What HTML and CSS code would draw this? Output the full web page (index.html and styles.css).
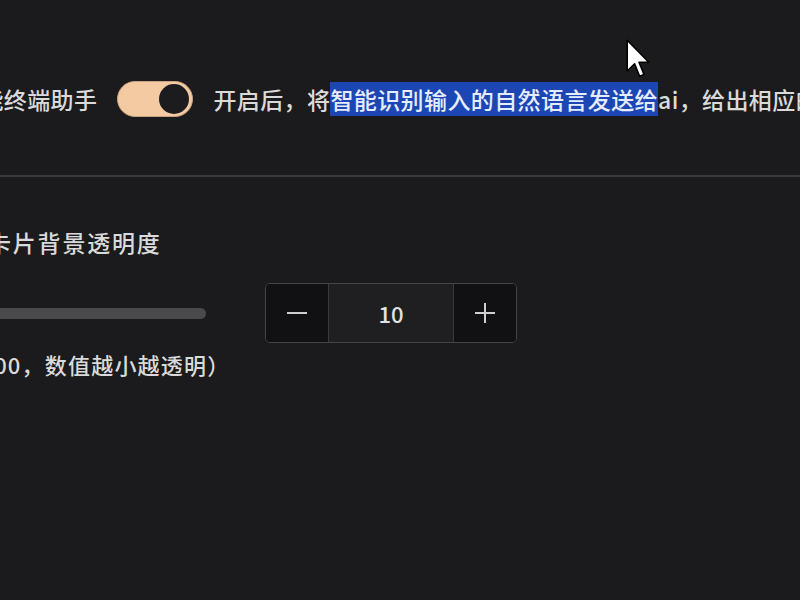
FILE: index.html
```html
<!DOCTYPE html>
<html lang="zh">
<head>
<meta charset="utf-8">
<link rel="stylesheet" href="styles.css">
</head>
<body>
<div class="page">
  <div class="row-assistant">
    <span class="label">智能终端助手</span>
    <span class="toggle"><span class="knob"></span></span>
    <span class="hint">开启后，将<span class="sel">智能识别输入的自然语言发送给</span>ai，给出相应的命令建议</span>
  </div>
  <div class="divider"></div>
  <div class="section">
    <div class="title">卡片背景透明度</div>
    <div class="control-row">
      <div class="track"></div>
      <div class="stepper">
        <button class="btn"><svg width="22" height="22" viewBox="0 0 22 22"><path d="M1 11H21" stroke="#cfcfcf" stroke-width="2"/></svg></button>
        <div class="value">10</div>
        <button class="btn"><svg width="22" height="22" viewBox="0 0 22 22"><path d="M1 11H21M11 1V21" stroke="#cfcfcf" stroke-width="2"/></svg></button>
      </div>
    </div>
    <div class="desc">（范围0-100，数值越小越透明）</div>
  </div>
</div>
<svg class="cursor" width="24" height="40" viewBox="0 0 12 20"><path d="M0.6 0.6 L0.6 16 L4.3 12.4 L6.8 18.6 L9 17.7 L6.5 11.6 L11.4 11.6 Z" fill="#fff" stroke="#000" stroke-width="0.8" stroke-linejoin="round"/></svg>
</body>
</html>
```
FILE: styles.css
```css
html, body {
  margin: 0;
  padding: 0;
  background: #1b1b1d;
  overflow: hidden;
  width: 800px;
  height: 600px;
}
body {
  position: relative;
  font-family: "Noto Sans CJK SC", "Noto Sans", sans-serif;
  color: #dadada;
}
.page {
  display: flex;
  flex-direction: column;
}
.row-assistant {
  display: flex;
  align-items: center;
  gap: 20px;
  margin-top: 81px;
  margin-left: -43px;
  white-space: nowrap;
  font-size: 23px;
  font-weight: 500;
  letter-spacing: 0.4px;
  height: 36px;
}
.toggle {
  flex: none;
  width: 76px;
  height: 36px;
  border-radius: 18px;
  background: #f4caa2;
  box-sizing: border-box;
  border: 1px solid #c9a27f;
  display: flex;
  align-items: center;
  justify-content: flex-end;
  padding-right: 3px;
}
.knob {
  width: 30px;
  height: 30px;
  border-radius: 50%;
  background: #1c1c1e;
}
.sel {
  background: #1b46b4;
  color: #e6ecff;
}
.divider {
  height: 2px;
  background: #3a3a3c;
  margin-top: 58px;
}
.section {
  display: flex;
  flex-direction: column;
  margin-top: 50px;
}
.title {
  font-size: 23px;
  font-weight: 500;
  line-height: 30px;
  letter-spacing: 1.8px;
  margin-left: -12px;
  white-space: nowrap;
}
.control-row {
  display: flex;
  align-items: center;
  gap: 59px;
  margin-top: 26px;
}
.track {
  height: 11px;
  border-radius: 6px;
  background: #4a4a4c;
  margin-left: -10px;
  width: 216px;
}
.stepper {
  display: flex;
  width: 252px;
  height: 60px;
  box-sizing: border-box;
  border: 1px solid #444446;
  border-radius: 5px;
  overflow: hidden;
}
.btn {
  width: 62px;
  border: 0;
  padding: 0;
  background: #111113;
  display: flex;
  align-items: center;
  justify-content: center;
}
.value {
  flex: 1;
  background: #1f1f21;
  border-left: 1px solid #3a3a3c;
  border-right: 1px solid #3a3a3c;
  display: flex;
  align-items: center;
  justify-content: center;
  font-size: 22px;
  font-weight: 500;
  color: #e2e2e2;
}
.desc {
  font-size: 22px;
  font-weight: 500;
  line-height: 30px;
  letter-spacing: 1.2px;
  margin-top: 6px;
  margin-left: -112px;
  white-space: nowrap;
}
.cursor {
  position: absolute;
  left: 626px;
  top: 39px;
}
```
